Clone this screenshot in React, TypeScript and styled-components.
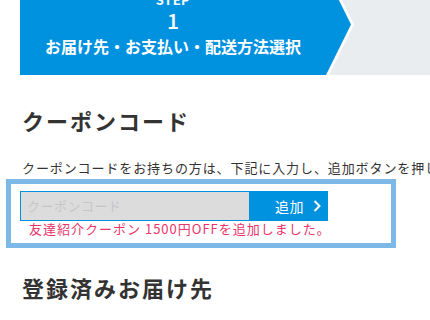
import React from "react";
import styled, { createGlobalStyle } from "styled-components";

const Global = createGlobalStyle`
  html, body { margin: 0; padding: 0; background: #fff; overflow: hidden; }
  body {
    font-family: "Noto Sans CJK JP", "Noto Sans", sans-serif;
    color: #333;
  }
`;

const Page = styled.div`
  width: 430px;
  height: 320px;
  overflow: hidden;
`;

const StepBar = styled.div`
  display: flex;
  margin: -26px 0 0 20px;
  height: 101px;
  background: #e9edf0;
`;

const StepOutline = styled.div`
  width: 334px;
  height: 101px;
  background: #fff;
  clip-path: polygon(0 0, 309px 0, 334px 50.5px, 309px 101px, 0 101px);
`;

const StepShape = styled.div`
  width: 331px;
  height: 101px;
  box-sizing: border-box;
  padding: 19px 25px 0 0;
  background: #0091df;
  color: #fff;
  font-weight: 700;
  display: flex;
  flex-direction: column;
  align-items: center;
  clip-path: polygon(0 0, 306px 0, 331px 50.5px, 306px 101px, 0 101px);
`;

const StepLabel = styled.div`
  font-size: 13px;
  line-height: 14px;
  letter-spacing: 0.5px;
`;

const StepNumber = styled.div`
  font-size: 21px;
  line-height: 26px;
  font-weight: 500;
`;

const StepTitle = styled.div`
  margin-top: 2px;
  font-size: 16px;
  line-height: 22px;
  white-space: nowrap;
`;

const Content = styled.div`
  padding: 0 0 0 20px;
`;

const Heading = styled.h2<{ $gap: number }>`
  margin: ${(p) => p.$gap}px 0 0 2px;
  font-size: 22px;
  line-height: 30.8px;
  font-weight: 700;
  letter-spacing: 2px;
  color: #333;
  white-space: nowrap;
`;

const Description = styled.p`
  margin: 22px 0 0 2px;
  font-size: 13px;
  line-height: 20px;
  letter-spacing: 0.9px;
  white-space: nowrap;
  color: #333;
`;

const CouponBox = styled.div`
  margin: 1px 0 0 -14px;
  width: 390px;
  box-sizing: border-box;
  border: 5px solid #7cb9e6;
  padding: 7px 0 0 9px;
  background: #fff;
`;

const InputRow = styled.div`
  display: flex;
  height: 30px;
`;

const CodeInput = styled.input`
  width: 229px;
  height: 30px;
  box-sizing: border-box;
  border: 1px solid #0091df;
  border-right: none;
  background: #dcdcdc;
  padding: 0 0 0 6px;
  font-family: inherit;
  font-size: 13px;
  letter-spacing: 0.5px;
  color: #333;
  outline: none;
  &::placeholder { color: #c6c6c6; }
`;

const AddButton = styled.button`
  width: 79px;
  height: 30px;
  border: none;
  background: #0091df;
  color: #fff;
  font-family: inherit;
  font-size: 14px;
  letter-spacing: 0.5px;
  display: flex;
  align-items: center;
  gap: 9px;
  padding: 0 0 0 26px;
  box-sizing: border-box;
  cursor: pointer;
`;

const Message = styled.div`
  margin-left: 9px;
  padding-bottom: 6px;
  font-size: 13px;
  line-height: 16px;
  letter-spacing: 1px;
  color: #e8356a;
  white-space: nowrap;
`;

export default function App() {
  return (
    <Page>
      <Global />
      <StepBar>
        <StepOutline>
          <StepShape>
            <StepLabel>STEP</StepLabel>
            <StepNumber>1</StepNumber>
            <StepTitle>お届け先・お支払い・配送方法選択</StepTitle>
          </StepShape>
        </StepOutline>
      </StepBar>
      <Content>
        <Heading $gap={30}>クーポンコード</Heading>
        <Description>
          クーポンコードをお持ちの方は、下記に入力し、追加ボタンを押してください。
        </Description>
        <CouponBox>
          <InputRow>
            <CodeInput placeholder="クーポンコード" />
            <AddButton>
              追加
              <svg width="8" height="12" viewBox="0 0 8 12" aria-hidden="true">
                <polyline points="1.5,1 6.5,6 1.5,11" fill="none" stroke="#fff" strokeWidth="2" />
              </svg>
            </AddButton>
          </InputRow>
          <Message>友達紹介クーポン 1500円OFFを追加しました。</Message>
        </CouponBox>
        <Heading $gap={24}>登録済みお届け先</Heading>
      </Content>
    </Page>
  );
}
